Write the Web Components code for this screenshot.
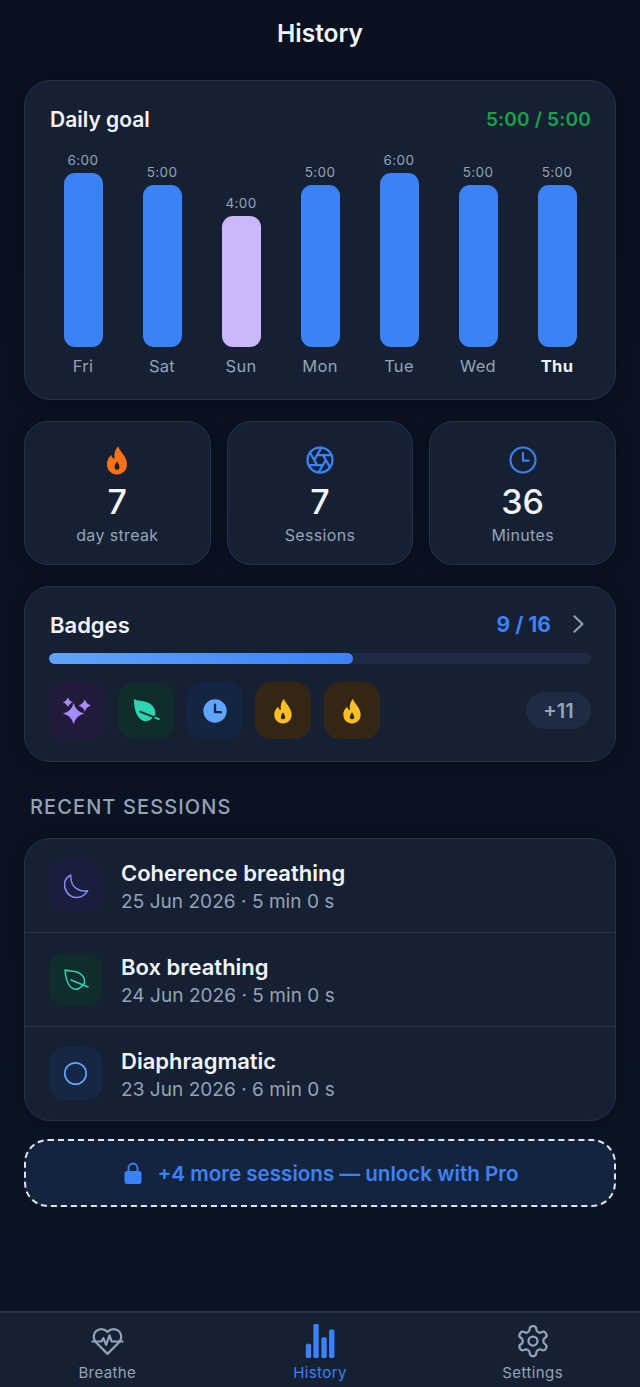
<!DOCTYPE html>
<html lang="en">
<head>
<meta charset="utf-8">
<title>History</title>
<style>
  html, body { margin: 0; height: 1387px; overflow: hidden; }
  body {
    background: linear-gradient(#0a101f, #0b1424);
    font-family: Inter, "Liberation Sans", sans-serif;
    color: #f1f5f9;
    display: flex;
    flex-direction: column;
  }
  main { flex: 1; display: flex; flex-direction: column; padding: 0 24px; min-height: 0; }
  tab-bar { margin-top: auto; }
</style>
</head>
<body>
<main>
  <screen-title>History</screen-title>

  <daily-goal total="5:00 / 5:00">
    <goal-bar value="6:00" day="Fri" height="174"></goal-bar>
    <goal-bar value="5:00" day="Sat" height="162"></goal-bar>
    <goal-bar value="4:00" day="Sun" height="131" color="#cbb8fb"></goal-bar>
    <goal-bar value="5:00" day="Mon" height="162"></goal-bar>
    <goal-bar value="6:00" day="Tue" height="174"></goal-bar>
    <goal-bar value="5:00" day="Wed" height="162"></goal-bar>
    <goal-bar value="5:00" day="Thu" height="162" today></goal-bar>
  </daily-goal>

  <stat-row>
    <stat-tile value="7" label="day streak"><app-icon name="flame" size="30" color="#f97316"></app-icon></stat-tile>
    <stat-tile value="7" label="Sessions"><app-icon name="aperture" size="30" color="#3b82f6"></app-icon></stat-tile>
    <stat-tile value="36" label="Minutes"><app-icon name="clock" size="30" color="#3b82f6"></app-icon></stat-tile>
  </stat-row>

  <badges-card count="9 / 16" percent="56" more="+11">
    <badge-tile bg="#221a3b"><app-icon name="sparkles" size="30" color="#a78bfa"></app-icon></badge-tile>
    <badge-tile bg="#0f2d2a"><app-icon name="leafFill" size="28" color="#2dd4b0"></app-icon></badge-tile>
    <badge-tile bg="#142544"><app-icon name="clockFill" size="28" color="#60a5fa"></app-icon></badge-tile>
    <badge-tile bg="#332614"><app-icon name="flame" size="26" color="#fbbf24"></app-icon></badge-tile>
    <badge-tile bg="#332614"><app-icon name="flame" size="26" color="#fbbf24"></app-icon></badge-tile>
  </badges-card>

  <section-label>RECENT SESSIONS</section-label>

  <session-list>
    <session-row title="Coherence breathing" meta="25 Jun 2026 · 5 min 0 s" bg="#1a1e3c"><app-icon name="moon" size="24" color="#818cf8"></app-icon></session-row>
    <session-row title="Box breathing" meta="24 Jun 2026 · 5 min 0 s" bg="#102c2c"><app-icon name="leaf" size="24" color="#2dd4b0"></app-icon></session-row>
    <session-row title="Diaphragmatic" meta="23 Jun 2026 · 6 min 0 s" bg="#152745"><app-icon name="circle" size="27" color="#60a5fa"></app-icon></session-row>
  </session-list>

  <unlock-banner>+4 more sessions — unlock with Pro</unlock-banner>
</main>

<tab-bar>
  <tab-item label="Breathe"><app-icon name="heartPulse" size="33" color="#94a3b8"></app-icon></tab-item>
  <tab-item label="History" active><app-icon name="bars" size="36" color="#3b82f6"></app-icon></tab-item>
  <tab-item label="Settings"><app-icon name="settings" size="36" color="#94a3b8"></app-icon></tab-item>
</tab-bar>

<script>
const ICONS = {
  flame: `<path fill="currentColor" fill-rule="evenodd" d="M13 .8C13.500 5 20 8.500 20 15.500 20 20 16.500 23.500 12 23.500S4 20 4 15.500C4 11.500 6 9.500 7.500 8 8 10 9 11 10 11 9.500 7 10.500 3.500 13 .8ZM12 13.200c-1.100 1.500-2 3-2 4.500a2 2 0 0 0 4 0c0-1.500-.9-3-2-4.500Z"/>`,
  aperture: `<g fill="none" stroke="currentColor" stroke-width="1.800" stroke-linecap="round" stroke-linejoin="round"><circle cx="12" cy="12" r="10"/><path d="m14.310 8 5.740 9.940M9.690 8h11.480M7.380 12l5.740-9.940M9.690 16 3.950 6.060M14.310 16H2.830M16.620 12l-5.740 9.940"/></g>`,
  clock: `<g fill="none" stroke="currentColor" stroke-width="1.700" stroke-linecap="round" stroke-linejoin="round"><circle cx="12" cy="12" r="10"/><path d="M12 6.500V12.500H16.500"/></g>`,
  clockFill: `<circle cx="12" cy="12" r="10" fill="currentColor"/><path d="M12 6.500V13H17" fill="none" stroke="#142544" stroke-width="2" stroke-linecap="round" stroke-linejoin="round"/>`,
  sparkles: `<g fill="currentColor"><path d="M9.300 5.500Q11 12.300 17.800 14 11 15.700 9.300 22.500 7.600 15.700.8 14 7.600 12.300 9.300 5.500Z"/><path d="M4.700 1Q5.700 4 8.700 5 5.700 6 4.700 9 3.700 6 .7 5 3.700 4 4.700 1Z"/><path d="M18.200 2.600Q19.400 6.400 23.200 7.600 19.400 8.800 18.200 12.600 17 8.800 13.200 7.600 17 6.400 18.200 2.600Z"/></g>`,
  leaf: `<g fill="none" stroke="currentColor" stroke-width="1.500" stroke-linecap="round" stroke-linejoin="round"><path d="M1 2C5 3.500 9 2.500 13 4c5 2 8 6 7.500 11-3 4.500-6.500 7-10.500 6C5 19.500 2 13 1 2Z"/><path d="M7 12l17 7"/></g>`,
  leafFill: `<path fill="currentColor" d="M1.500 2C5 3.800 9 3 13 4.500c5 2 7.500 6 7 10.500-3 4.500-6.500 6.500-10 5.500C5 19 2 13 1.500 2Z"/><path d="M7 12.500l16 6.500" fill="none" stroke="#132a33" stroke-width="1.600" stroke-linecap="round"/><path d="M20 17.700l3 1.300" fill="none" stroke="currentColor" stroke-width="1.600" stroke-linecap="round"/>`,
  moon: `<path fill="none" stroke="currentColor" stroke-width="1.500" stroke-linecap="round" stroke-linejoin="round" d="M6.700 1C1.500 4 0 9 .8 13 2 20 8 24 13 23.500 17.500 23.500 21.500 20.500 23.700 16.700 17 18 11 15 8.500 10.500 7 7.500 6.500 4 6.700 1Z"/>`,
  circle: `<circle cx="12" cy="12" r="9.500" fill="none" stroke="currentColor" stroke-width="1.500"/>`,
  lock: `<path fill="currentColor" d="M6 10h12a2.500 2.500 0 0 1 2.500 2.500v8A2.500 2.500 0 0 1 18 23H6a2.500 2.500 0 0 1-2.500-2.500v-8A2.500 2.500 0 0 1 6 10Z"/><path d="M7.500 11V7a4.500 4.500 0 0 1 9 0v4" fill="none" stroke="currentColor" stroke-width="1.800"/>`,
  heartPulse: `<g fill="none" stroke="currentColor" stroke-width="1.600" stroke-linecap="round" stroke-linejoin="round"><path d="M19 14c1.490-1.460 3-3.210 3-5.500A5.500 5.500 0 0 0 16.500 3c-1.760 0-3 .5-4.500 2-1.500-1.500-2.740-2-4.500-2A5.500 5.500 0 0 0 2 8.500c0 2.300 1.500 4.050 3 5.500l7 7Z"/><path d="M1 12h6.500l1.500-2.500 2 5 2.500-7 1.500 4.500H23"/></g>`,
  bars: `<g fill="currentColor"><rect x="2.550" y="13.900" width="3.550" height="9.400" rx="1"/><rect x="7.600" y=".6" width="3.550" height="22.700" rx="1"/><rect x="12.950" y="9.500" width="3.550" height="13.800" rx="1"/><rect x="18.050" y="4.400" width="3.550" height="18.900" rx="1"/></g>`,
  settings: `<g fill="none" stroke="currentColor" stroke-width="1.500" stroke-linecap="round" stroke-linejoin="round"><path d="M12.220 2h-.44a2 2 0 0 0-2 2v.18a2 2 0 0 1-1 1.730l-.43.25a2 2 0 0 1-2 0l-.15-.08a2 2 0 0 0-2.730.73l-.22.38a2 2 0 0 0 .73 2.730l.15.1a2 2 0 0 1 1 1.720v.51a2 2 0 0 1-1 1.740l-.15.09a2 2 0 0 0-.73 2.730l.22.38a2 2 0 0 0 2.730.73l.15-.08a2 2 0 0 1 2 0l.43.25a2 2 0 0 1 1 1.730V20a2 2 0 0 0 2 2h.44a2 2 0 0 0 2-2v-.18a2 2 0 0 1 1-1.730l.43-.25a2 2 0 0 1 2 0l.15.08a2 2 0 0 0 2.730-.73l.22-.39a2 2 0 0 0-.73-2.730l-.15-.08a2 2 0 0 1-1-1.740v-.5a2 2 0 0 1 1-1.740l.15-.09a2 2 0 0 0 .73-2.730l-.22-.38a2 2 0 0 0-2.730-.73l-.15.08a2 2 0 0 1-2 0l-.43-.25a2 2 0 0 1-1-1.730V4a2 2 0 0 0-2-2Z"/><circle cx="12" cy="12" r="3"/></g>`,
  chevron: `<path d="M8 3.500 17 12l-9 8.500" fill="none" stroke="currentColor" stroke-width="2.200" stroke-linecap="round" stroke-linejoin="round"/>`
};

const CARD = `background:#162033;border:1.500px solid #263349;box-shadow:0 2px 14px rgba(0,0,0,.25);box-sizing:border-box;`;

class BaseElement extends HTMLElement {
  constructor() {
    super();
    this.attachShadow({ mode: 'open' });
  }
  connectedCallback() {
    this.render();
  }
  attr(name, fallback = '') {
    return this.getAttribute(name) || fallback;
  }
}

class AppIcon extends BaseElement {
  render() {
    const size = this.attr('size', '24');
    this.shadowRoot.innerHTML = `
      <style>
        :host { display: block; width: ${size}px; height: ${size}px; color: ${this.attr('color', 'currentColor')}; }
        svg { display: block; width: 100%; height: 100%; overflow: visible; }
      </style>
      <svg viewBox="0 0 24 24">${ICONS[this.attr('name')] || ''}</svg>`;
  }
}

class ScreenTitle extends BaseElement {
  render() {
    this.shadowRoot.innerHTML = `
      <style>
        :host { display: block; height: 80px; box-sizing: border-box; padding-top: 18px; text-align: center;
          font-size: 24.500px; line-height: 30px; font-weight: 600; color: #f1f5f9; }
      </style>
      <slot></slot>`;
  }
}

class DailyGoal extends BaseElement {
  render() {
    this.shadowRoot.innerHTML = `
      <style>
        :host { display: block; height: 320px; ${CARD} border-radius: 26px; padding: 24px 24px 0 25px; }
        .head { display: flex; justify-content: space-between; align-items: center; height: 28px; }
        h2 { margin: 0; font-size: 21px; font-weight: 600; color: #f1f5f9; }
        .total { font-size: 19px; font-weight: 600; color: #16a34a; letter-spacing: .2px; }
        .chart { display: grid; grid-template-columns: repeat(7, 1fr); margin: 3px -5.500px 0 -6.500px; height: 240px; }
      </style>
      <div class="head"><h2>Daily goal</h2><span class="total">${this.attr('total')}</span></div>
      <div class="chart"><slot></slot></div>`;
  }
}

class GoalBar extends BaseElement {
  render() {
    const today = this.hasAttribute('today');
    this.shadowRoot.innerHTML = `
      <style>
        :host { display: flex; flex-direction: column; align-items: center; justify-content: flex-end; }
        .value { font-size: 13.500px; line-height: 16px; letter-spacing: .4px; color: #94a3b8; margin-bottom: 5px; }
        .bar { width: 39px; height: ${this.attr('height')}px; border-radius: 11px; background: ${this.attr('color', '#3b82f6')}; }
        .day { font-size: 16.500px; line-height: 20px; margin-top: 9px; letter-spacing: .3px;
          color: ${today ? '#f1f5f9' : '#94a3b8'}; font-weight: ${today ? 700 : 400}; }
      </style>
      <span class="value">${this.attr('value')}</span>
      <div class="bar"></div>
      <span class="day">${this.attr('day')}</span>`;
  }
}

class StatRow extends BaseElement {
  render() {
    this.shadowRoot.innerHTML = `
      <style>
        :host { display: grid; grid-template-columns: repeat(3, 1fr); column-gap: 16px; margin-top: 21px; }
      </style>
      <slot></slot>`;
  }
}

class StatTile extends BaseElement {
  render() {
    this.shadowRoot.innerHTML = `
      <style>
        :host { display: flex; flex-direction: column; align-items: center; height: 144px; ${CARD}
          border-radius: 24px; padding-top: 23px; }
        .value { font-size: 34px; line-height: 40px; font-weight: 500; color: #f1f5f9; margin-top: 7px; }
        .label { font-size: 16px; line-height: 22px; letter-spacing: .35px; color: #94a3b8; margin-top: 2px; }
      </style>
      <slot></slot>
      <span class="value">${this.attr('value')}</span>
      <span class="label">${this.attr('label')}</span>`;
  }
}

class BadgesCard extends BaseElement {
  render() {
    this.shadowRoot.innerHTML = `
      <style>
        :host { display: block; height: 176px; ${CARD} border-radius: 26px; padding: 24px 24px 0; margin-top: 21px; }
        .head { display: flex; align-items: center; height: 28px; padding-left: 1px; }
        h2 { margin: 0; font-size: 22px; font-weight: 600; color: #f1f5f9; flex: 1; }
        .count { font-size: 21px; font-weight: 700; color: #3b82f6; margin-top: -2px; }
        .go { margin: -2px 2px 0 16px; }
        .track { height: 11px; border-radius: 6px; background: #1f2b42; margin-top: 14px; overflow: hidden; }
        .fill { height: 100%; width: ${this.attr('percent')}%; border-radius: 6px; background: linear-gradient(90deg, #60a5fa, #3b82f6); }
        .row { display: flex; align-items: center; gap: 12.750px; margin-top: 18px; }
        .more { margin-left: auto; width: 65px; height: 37px; border-radius: 19px; background: #1f2b42; color: #94a3b8;
          font-size: 20px; font-weight: 600; display: flex; align-items: center; justify-content: center; }
      </style>
      <div class="head">
        <h2>Badges</h2>
        <span class="count">${this.attr('count')}</span>
        <app-icon class="go" name="chevron" size="22" color="#94a3b8"></app-icon>
      </div>
      <div class="track"><div class="fill"></div></div>
      <div class="row"><slot></slot><span class="more">${this.attr('more')}</span></div>`;
  }
}

class BadgeTile extends BaseElement {
  render() {
    this.shadowRoot.innerHTML = `
      <style>
        :host { display: flex; align-items: center; justify-content: center; width: 56px; height: 57px;
          border-radius: 16px; background: ${this.attr('bg')}; }
      </style>
      <slot></slot>`;
  }
}

class SectionLabel extends BaseElement {
  render() {
    this.shadowRoot.innerHTML = `
      <style>
        :host { display: block; padding: 32px 6px 18px; font-size: 20px; line-height: 26px; font-weight: 500;
          letter-spacing: 1.100px; color: #94a3b8; }
      </style>
      <slot></slot>`;
  }
}

class SessionList extends BaseElement {
  render() {
    this.shadowRoot.innerHTML = `
      <style>
        :host { display: flex; flex-direction: column; height: 283px; ${CARD} border-radius: 26px; overflow: hidden; }
      </style>
      <slot></slot>`;
  }
}

class SessionRow extends BaseElement {
  render() {
    this.shadowRoot.innerHTML = `
      <style>
        :host { display: flex; flex: 1; align-items: center; gap: 19px; box-sizing: border-box; padding: 0 24px; }
        :host(:not(:last-child)) { border-bottom: 1.500px solid #263349; }
        .icon { width: 53px; height: 53px; border-radius: 15px; background: ${this.attr('bg')};
          display: flex; align-items: center; justify-content: center; flex: none; }
        .text { padding-top: 2px; }
        .title { font-size: 22px; line-height: 28px; font-weight: 600; color: #f1f5f9; }
        .meta { font-size: 19px; line-height: 26px; letter-spacing: .05px; color: #94a3b8; margin-top: 2px; }
      </style>
      <div class="icon"><slot></slot></div>
      <div class="text">
        <div class="title">${this.attr('title')}</div>
        <div class="meta">${this.attr('meta')}</div>
      </div>`;
  }
}

class UnlockBanner extends BaseElement {
  render() {
    this.shadowRoot.innerHTML = `
      <style>
        :host { display: flex; align-items: center; justify-content: center; gap: 12px; height: 68px; box-sizing: border-box;
          margin-top: 18px; border: 2px dashed #dfe5ee; border-radius: 24px; background: #14243f;
          color: #3b82f6; font-size: 20.600px; font-weight: 600; }
      </style>
      <app-icon name="lock" size="24" color="#3b82f6"></app-icon>
      <span><slot></slot></span>`;
  }
}

class TabBar extends BaseElement {
  render() {
    this.shadowRoot.innerHTML = `
      <style>
        :host { display: grid; grid-template-columns: repeat(3, 1fr); height: 76px; box-sizing: border-box; padding: 0 1px;
          background: #162033; border-top: 2px solid #263349; }
      </style>
      <slot></slot>`;
  }
}

class TabItem extends BaseElement {
  render() {
    const active = this.hasAttribute('active');
    this.shadowRoot.innerHTML = `
      <style>
        :host { display: flex; flex-direction: column; align-items: center; padding-top: 10px; }
        .icon { height: 36px; display: flex; align-items: center; }
        span { font-size: 15px; line-height: 20px; letter-spacing: .4px; margin-top: 4px;
          color: ${active ? '#3b82f6' : '#94a3b8'}; }
      </style>
      <div class="icon"><slot></slot></div>
      <span>${this.attr('label')}</span>`;
  }
}

customElements.define('app-icon', AppIcon);
customElements.define('screen-title', ScreenTitle);
customElements.define('daily-goal', DailyGoal);
customElements.define('goal-bar', GoalBar);
customElements.define('stat-row', StatRow);
customElements.define('stat-tile', StatTile);
customElements.define('badges-card', BadgesCard);
customElements.define('badge-tile', BadgeTile);
customElements.define('section-label', SectionLabel);
customElements.define('session-list', SessionList);
customElements.define('session-row', SessionRow);
customElements.define('unlock-banner', UnlockBanner);
customElements.define('tab-bar', TabBar);
customElements.define('tab-item', TabItem);
</script>
</body>
</html>
